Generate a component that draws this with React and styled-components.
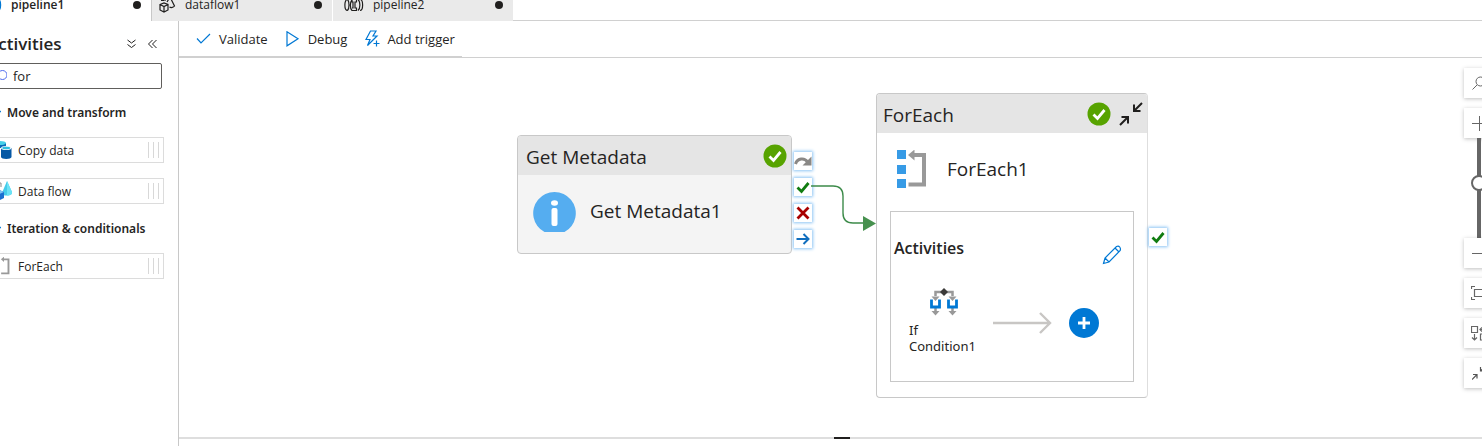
import React from "react";
import styled, { createGlobalStyle } from "styled-components";

const GlobalStyle = createGlobalStyle`
  *, *::before, *::after { box-sizing: border-box; }
  body {
    margin: 0;
    background: #fff;
    color: #252423;
    font-family: "Open Sans", "Noto Sans", sans-serif;
    overflow: hidden;
  }
  button, input { font: inherit; color: inherit; }
  button { margin: 0; padding: 0; border: 0; background: none; cursor: pointer; }
  h2, h3, h4, p, ul { margin: 0; padding: 0; }
  ul { list-style: none; }
  svg { display: block; flex: none; }
`;

const Viewport = styled.div`
  height: 100vh;
  overflow: hidden;
`;

const Shell = styled.div`
  display: flex;
  flex-direction: column;
  height: calc(100% + 12px);
  margin: -12px -12px 0 -29px;
`;

const TabBar = styled.div`
  display: flex;
  flex: none;
  height: 33px;
  border-bottom: 1px solid #d0d0d0;
`;

const Tab = styled.button`
  display: flex;
  align-items: center;
  width: ${(p) => (p.$active ? 180 : 181)}px;
  height: 33px;
  padding: 0 10px 0 ${(p) => p.$inset}px;
  gap: 9px;
  border-left: ${(p) => (p.$edge ? `1px solid ${p.$edge}` : "0")};
  background: ${(p) => (p.$active ? "#fff" : "#eaeaea")};
  font-size: 12px;
  font-weight: ${(p) => (p.$active ? 600 : 400)};
  line-height: 12px;
`;

const TabLabel = styled.span`
  flex: 1;
  text-align: left;
`;

const Dot = styled.span`
  width: 8px;
  height: 8px;
  border-radius: 50%;
  background: #201f1e;
`;

const Workspace = styled.div`
  display: flex;
  flex: 1;
  min-height: 0;
`;

const Sidebar = styled.aside`
  flex: none;
  width: 208px;
  padding: 12px 14px 0 16px;
  border-right: 1px solid #c8c8c8;
`;

const SidebarHeader = styled.div`
  display: flex;
  align-items: center;
  gap: 12px;
  height: 22px;
  padding-right: 7px;
`;

const SidebarTitle = styled.h2`
  flex: 1;
  font-size: 17px;
  font-weight: 600;
  line-height: 22px;
`;

const SearchBox = styled.label`
  display: flex;
  align-items: center;
  gap: 6px;
  height: 26px;
  margin: 8px 2px 0 0;
  padding-left: 7px;
  border: 1px solid #605e5c;
  border-radius: 2px;
`;

const SearchInput = styled.input`
  flex: 1;
  min-width: 0;
  padding: 0;
  border: 0;
  outline: 0;
  background: none;
  font-size: 13px;
  line-height: 16px;
`;

const GroupToggle = styled.button`
  display: flex;
  align-items: center;
  gap: 6px;
  height: 20px;
  margin-top: 14px;
  font-family: "Noto Sans", "Open Sans", sans-serif;
  font-size: 12px;
  font-weight: 600;
  line-height: 20px;
  white-space: nowrap;
`;

const ActivityList = styled.ul`
  display: flex;
  flex-direction: column;
  gap: 15px;
  padding: 14px 0 1px;
`;

const ActivityItem = styled.li`
  display: flex;
  align-items: center;
  gap: 6px;
  height: 26px;
  padding: 0 4px 0 2px;
  border: 1px solid #dcdcdc;
  font-size: 12px;
  line-height: 16px;
`;

const ActivityName = styled.span`
  flex: 1;
  padding-top: 2px;
`;

const Grip = styled.span`
  display: flex;
  gap: 4px;
  height: 16px;

  &::before, &::after, & > i { content: ""; width: 1px; background: #d8d8d8; }
`;

const Main = styled.main`
  display: flex;
  flex: 1;
  flex-direction: column;
  min-width: 0;
`;

const Toolbar = styled.div`
  display: flex;
  flex: none;
  height: 37px;
  border-bottom: 1px solid #d0d0d0;
`;

const ToolbarActions = styled.div`
  display: flex;
  align-items: center;
  gap: 17px;
  height: 37px;
  padding: 0 7px 0 16px;
  border-bottom: 2px solid #d0d0d0;
`;

const ToolButton = styled.button`
  display: flex;
  align-items: center;
  gap: 7px;
  font-size: 13px;
  line-height: 20px;
`;

const Canvas = styled.section`
  position: relative;
  flex: 1;
  min-height: 0;
`;

const Splitter = styled.div`
  display: flex;
  flex: none;
  height: 9px;

  &::before, &::after {
    content: "";
    flex: 1 1 0;
    height: 2px;
    background: #dedede;
  }
  &::before { flex-basis: 11px; }
`;

const SplitterHandle = styled.span`
  width: 16px;
  height: 2px;
  background: #201f1e;
`;

const Node = styled.article`
  position: absolute;
  left: ${(p) => p.$x}px;
  top: ${(p) => p.$y}px;
  width: ${(p) => p.$width}px;
  border: 1px solid #c8c8c8;
  border-right-color: ${(p) => p.$farEdge || "#c8c8c8"};
  border-radius: 4px;
  background: ${(p) => p.$fill};
`;

const NodeHeader = styled.header`
  display: flex;
  align-items: center;
  gap: 8px;
  height: 39px;
  padding: 0 4px 0 ${(p) => p.$inset}px;
  border-radius: 3px 3px 0 0;
  background: #e5e5e5;
`;

const NodeType = styled.h3`
  flex: 1;
  padding-top: 2px;
  font-size: 19px;
  font-weight: 400;
  line-height: 24px;
`;

const NodeBody = styled.div`
  display: flex;
  align-items: center;
  gap: ${(p) => p.$gap}px;
  height: ${(p) => p.$height}px;
  padding: 0 0 ${(p) => p.$below || 0}px ${(p) => p.$inset}px;
`;

const NodeName = styled.p`
  font-size: 19px;
  line-height: 24px;
`;

const Ports = styled.div`
  position: absolute;
  left: ${(p) => p.$x}px;
  top: ${(p) => p.$y}px;
  display: flex;
  flex-direction: column;
  gap: 8px;
`;

const Port = styled.button`
  display: grid;
  place-items: center;
  width: 18px;
  height: 18px;
  background: #fff;
  box-shadow: 0 0 3px 1px #8cc4f4;
`;

const Connector = styled.svg`
  position: absolute;
  left: 632px;
  top: 120px;
`;

const InnerPanel = styled.div`
  margin: 7px 13px 15px;
  padding: 0 0 27px 3px;
  border: 1px solid #c8c8c8;
`;

const InnerHeader = styled.div`
  display: flex;
  justify-content: space-between;
  height: 72px;
  padding: 25px 11px 0 0;
`;

const InnerTitle = styled.h4`
  font-size: 16px;
  font-weight: 600;
  line-height: 22px;
`;

const EditButton = styled.button`
  align-self: flex-start;
  margin-top: 8px;
`;

const InnerFlow = styled.div`
  display: flex;
  align-items: center;
  gap: 16px;
  padding-left: 15px;
`;

const FlowStep = styled.div`
  display: flex;
  align-items: center;
  gap: 16px;
  padding-top: 8px;
`;

const ChildActivity = styled.div`
  width: 68px;
  font-family: "Noto Sans", "Open Sans", sans-serif;
  font-size: 13px;
  line-height: 16px;

  svg { margin: 4px 0 6px 20px; }
`;

const AddButton = styled.button`
  display: grid;
  place-items: center;
  width: 30px;
  height: 30px;
  border-radius: 50%;
  background: #0078d4;
`;

const ViewControls = styled.div`
  position: absolute;
  top: 10px;
  right: 0;
  display: flex;
  flex-direction: column;
  gap: 10px;
`;

const ZoomGroup = styled.div`
  display: flex;
  flex-direction: column;
`;

const ViewButton = styled.button`
  display: grid;
  place-items: center;
  width: 30px;
  height: 30px;
  background: #fff;
  box-shadow: 0 1px 4px rgba(0, 0, 0, 0.25);
`;

const ZoomSlider = styled.input`
  appearance: none;
  writing-mode: vertical-lr;
  direction: rtl;
  width: 30px;
  height: 100px;
  margin: 0;
  background: none;

  &::-webkit-slider-runnable-track {
    width: 4px;
    height: 100px;
    background: #666;
  }
  &::-webkit-slider-thumb {
    appearance: none;
    width: 16px;
    height: 16px;
    margin-left: -6px;
    border: 2px solid #666;
    border-radius: 50%;
    background: #fff;
  }
`;

const Line = ({ w, h = w, box, color = "#201f1e", sw = 1, children }) => (
  <svg width={w} height={h} viewBox={box || `0 0 ${w} ${h}`} fill="none" stroke={color} strokeWidth={sw}>
    {children}
  </svg>
);

const PipelineIcon = ({ color }) => (
  <Line w={20} h={14} color={color} sw={1.2}>
    <path d="M3.500 1.500C0 1.500 0 12.500 3.500 12.500M3.500 1.500c2 2 2 9 0 11M8 2c-2.200 2-2.200 8.500 0 10.500h4.500V10H11V4h1.500V1.500H8V4h1v6H8M16 1.500c3.500 0 3.500 11 0 11M14 1.500c2.500 2 2.500 9 0 11" />
  </Line>
);

const DataflowIcon = () => (
  <Line w={18} h={18} sw={1.2}>
    <path d="M2 8.500L6 7l4 1.500v5.500L6 16l-4-2zM2 8.500L6 10.500l4-2M6 10.500V16M12 1l4.500 9c-1 1.500-3.500 2-5 1M12 1L9 6M3 4.500h3M7 2v3" />
  </Line>
);

const CopyDataIcon = () => (
  <svg width="22" height="20" viewBox="0 0 22 20">
    <path d="M4 3v11c0 3 12 3 12 0V3z" fill="#0a6ab8" />
    <ellipse cx="10" cy="3" rx="6" ry="2" fill="#45d0e8" />
    <path d="M10 8v9c0 3.200 12 3.200 12 0V8z" fill="#fff" />
    <path d="M11 8v9c0 2.600 10.500 2.600 10.500 0V8z" fill="#0659a5" />
    <ellipse cx="16.200" cy="8" rx="5.200" ry="2" fill="#e8f5fb" />
    <ellipse cx="16.200" cy="8" rx="4" ry="1.200" fill="#2fc1e0" />
  </svg>
);

const DataFlowColorIcon = () => (
  <svg width="22" height="20" viewBox="0 0 22 20">
    <path d="M17 0l5.500 12c-1 3-8.500 3.500-11 1z" fill="#45ccea" />
    <path d="M17 0l5.500 12c-1 2-3.500 2.500-5.500 2.500z" fill="#6be2f5" />
    <path d="M2 11l6-2.500L14 11v6l-6 3-6-3z" fill="#1a6fd0" />
    <path d="M2 11l6-2.500L14 11l-6 2.500z" fill="#7cc4f5" />
    <path d="M8 2h3M11 2v4" stroke="#888" fill="none" />
  </svg>
);

const LoopShape = () => (
  <>
    <path d="M0 0h9v9H0zM0 15h9v9H0zM0 29h9v9H0z" fill="#379be6" />
    <path d="M17 5h10v29.500H11.500" fill="none" stroke="#999" strokeWidth="4" />
    <path d="M11 5l6.500-5.500v11z" fill="#999" />
  </>
);

const ForEachIcon = () => (
  <svg width="29" height="38" viewBox="0 0 29 38"><LoopShape /></svg>
);

const ForEachSmallIcon = () => (
  <svg width="22" height="18" viewBox="-12 0 46.400 38"><LoopShape /></svg>
);

const InfoIcon = () => (
  <svg width="43" height="41" viewBox="0 0 43 41">
    <path d="M11.500 41a21.300 21.300 0 1 1 20 0z" fill="#55adf0" />
    <ellipse cx="21.500" cy="12" rx="3.500" ry="2.700" fill="#fff" />
    <rect x="18.500" y="17" width="6" height="18" rx="2" fill="#fff" />
  </svg>
);

const SuccessIcon = () => (
  <svg width="24" height="24" viewBox="0 0 24 24" role="img" aria-label="Succeeded">
    <circle cx="12" cy="12" r="11.500" fill="#57a300" />
    <path d="M6.500 12.500l4 4 7-8.500" fill="none" stroke="#fff" strokeWidth="2.800" />
  </svg>
);

const CollapseIcon = () => (
  <Line w={24} h={24} sw={2}>
    <path d="M23 1l-8 8M15 2.500V9h6.500M1 23l8-8M2.500 15H9v6.500" />
  </Line>
);

const CheckPortIcon = () => (
  <Line w={14} color="#107c10" sw={2.800}><path d="M1.500 7.500l4 4L12.500 3" /></Line>
);

const ConditionIcon = () => (
  <svg width="30" height="28" viewBox="0 0 30 28">
    <path d="M6.500 8V4h17v4M6.500 20v4M23.500 20v4" fill="none" stroke="#999" strokeWidth="2.500" />
    <path d="M2.500 8.500h8l-4 4.500zM19.500 8.500h8l-4 4.500zM2.500 23h8l-4 4.500zM19.500 23h8l-4 4.500z" fill="#999" />
    <path d="M2.500 11.500v7.500h8v-7.500M19.500 11.500v7.500h8v-7.500" fill="none" stroke="#0078d4" strokeWidth="2.800" />
    <path d="M15 0l4 4-4 4-4-4z" fill="#3b3a39" />
  </svg>
);

function Activity({ icon, name }) {
  return (
    <ActivityItem>
      {icon}
      <ActivityName>{name}</ActivityName>
      <Grip><i /></Grip>
    </ActivityItem>
  );
}

function Group({ title, children }) {
  return (
    <section>
      <GroupToggle aria-expanded="true">
        <Line w={14} color="#0078d4" sw={1.200}><path d="M4 5l5 5 5-5" /></Line>
        {title}
      </GroupToggle>
      <ActivityList>{children}</ActivityList>
    </section>
  );
}

export default function App() {
  return (
    <Viewport>
      <GlobalStyle />
      <Shell>
        <TabBar>
          <Tab $active $inset={11}>
            <PipelineIcon color="#0078d4" />
            <TabLabel>pipeline1</TabLabel>
            <Dot />
          </Tab>
          <Tab $inset={6} $edge="#c8c8c8">
            <DataflowIcon />
            <TabLabel>dataflow1</TabLabel>
            <Dot />
          </Tab>
          <Tab $inset={11} $edge="#fff">
            <PipelineIcon />
            <TabLabel>pipeline2</TabLabel>
            <Dot />
          </Tab>
        </TabBar>
        <Workspace>
          <Sidebar>
            <SidebarHeader>
              <SidebarTitle>Activities</SidebarTitle>
              <button aria-label="Expand all">
                <Line w={9} h={10}><path d="M.5 1l4 3 4-3M.5 5.500l4 3 4-3" /></Line>
              </button>
              <button aria-label="Hide activities">
                <Line w={9} h={10}><path d="M4.500 1l-4 4 4 4M8.500 1l-4 4 4 4" /></Line>
              </button>
            </SidebarHeader>
            <SearchBox>
              <Line w={12} color="#4f6bed"><circle cx="7.500" cy="5" r="4.500" /><path d="M4.500 8L1 11.500" /></Line>
              <SearchInput type="text" aria-label="Search activities" defaultValue="for" />
            </SearchBox>
            <Group title="Move and transform">
              <Activity icon={<CopyDataIcon />} name="Copy data" />
              <Activity icon={<DataFlowColorIcon />} name="Data flow" />
            </Group>
            <Group title="Iteration &amp; conditionals">
              <Activity icon={<ForEachSmallIcon />} name="ForEach" />
            </Group>
          </Sidebar>
          <Main>
            <Toolbar>
              <ToolbarActions>
                <ToolButton>
                  <Line w={17} h={16} color="#0078d4" sw={1.200}><path d="M2 7.500l4 4.500L15 3" /></Line>
                  Validate
                </ToolButton>
                <ToolButton>
                  <Line w={16} h={16} color="#0078d4" sw={1.200}><path d="M2 .800v14l11-7z" /></Line>
                  Debug
                </ToolButton>
                <ToolButton>
                  <Line w={16} h={18} color="#0078d4" sw={1.200}>
                    <path d="M6.500 1H12L9 6h4L3.500 15.500 6 9.500H2zM12.500 10.500v6M9.500 13.500h6" />
                  </Line>
                  Add trigger
                </ToolButton>
              </ToolbarActions>
            </Toolbar>
            <Canvas>
              <Node $x={338} $y={77} $width={275} $fill="#f4f4f4">
                <NodeHeader $inset={8}>
                  <NodeType>Get Metadata</NodeType>
                  <SuccessIcon />
                </NodeHeader>
                <NodeBody $gap={14} $height={78} $inset={15} $below={6}>
                  <InfoIcon />
                  <NodeName>Get Metadata1</NodeName>
                </NodeBody>
                <Ports $x={276} $y={16}>
                  <Port aria-label="On skip">
                    <svg width="18" height="18" viewBox="0 0 18 18">
                      <path d="M1.500 12c2-6 9-6.500 12-2" fill="none" stroke="#8a8886" strokeWidth="3" />
                      <path d="M17.500 4.500v9H8.500z" fill="#8a8886" />
                    </svg>
                  </Port>
                  <Port aria-label="On success"><CheckPortIcon /></Port>
                  <Port aria-label="On fail">
                    <Line w={14} color="#a80000" sw={2.800}><path d="M1.500 1.500l11 11M12.500 1.500l-11 11" /></Line>
                  </Port>
                  <Port aria-label="On completion">
                    <Line w={14} color="#106ebe" sw={2}><path d="M.5 7h12M7.500 2l5 5-5 5" /></Line>
                  </Port>
                </Ports>
              </Node>
              <Connector width="66" height="56" viewBox="0 0 66 56">
                <path d="M0 8h22q10 0 10 10v17q0 10 10 10h12" fill="none" stroke="#3d8b4a" strokeWidth="1.400" />
                <path d="M52 38l13 7.500-13 7.500z" fill="#47914f" />
              </Connector>
              <Node $x={697} $y={35} $width={272} $fill="#fff" $farEdge="#dedede">
                <NodeHeader $inset={6}>
                  <NodeType>ForEach</NodeType>
                  <SuccessIcon />
                  <button aria-label="Collapse"><CollapseIcon /></button>
                </NodeHeader>
                <NodeBody $gap={21} $height={71} $inset={20}>
                  <ForEachIcon />
                  <NodeName>ForEach1</NodeName>
                </NodeBody>
                <InnerPanel>
                  <InnerHeader>
                    <InnerTitle>Activities</InnerTitle>
                    <EditButton aria-label="Edit activities">
                      <Line w={20} color="#0078d4" sw={1.200}>
                        <path d="M1.500 18.500l1.500-5.500L14.500 1.500q2-1 3.200.500t.500 3.500L7 17zM3 13l4 4M13 3l4 4" />
                      </Line>
                    </EditButton>
                  </InnerHeader>
                  <InnerFlow>
                    <ChildActivity>
                      <ConditionIcon />
                      If Condition1
                    </ChildActivity>
                    <FlowStep>
                      <Line w={60} h={22} color="#c8c6c4" sw={2.400}><path d="M0 11h57M47 1l10 10-10 10" /></Line>
                      <AddButton aria-label="Add activity">
                        <Line w={14} color="#fff" sw={2.800}><path d="M7 1v12M1 7h12" /></Line>
                      </AddButton>
                    </FlowStep>
                  </InnerFlow>
                </InnerPanel>
                <Ports $x={272} $y={134}>
                  <Port aria-label="On success"><CheckPortIcon /></Port>
                </Ports>
              </Node>
              <ViewControls>
                <ViewButton aria-label="Search canvas">
                  <Line w={14} color="#666"><circle cx="8.500" cy="5.500" r="4.500" /><path d="M5 9l-4.500 4.500" /></Line>
                </ViewButton>
                <ZoomGroup>
                  <ViewButton aria-label="Zoom in">
                    <Line w={15} color="#666"><path d="M7.500 0v15M0 7.500h15" /></Line>
                  </ViewButton>
                  <ZoomSlider type="range" aria-label="Zoom" min="0" max="100" defaultValue="56" />
                  <ViewButton aria-label="Zoom out">
                    <Line w={15} color="#666"><path d="M0 7.500h15" /></Line>
                  </ViewButton>
                </ZoomGroup>
                <ViewButton aria-label="Zoom to fit">
                  <Line w={16} color="#666" sw={1.200}>
                    <path d="M3.500 4.500h9v7h-9zM.5 4V1.500H4M12 1.500h3.500V4M.5 12v2.500H4M12 14.500h3.500V12" />
                  </Line>
                </ViewButton>
                <ViewButton aria-label="Auto align">
                  <Line w={16} color="#666" sw={1.200}>
                    <path d="M.5 1.500h6v6h-6zM9.500 9h6v6h-6zM3.500 9v6M1 12.500L3.500 15 6 12.500M9 4.500h4V8M11 2.500l-2 2 2 2" />
                  </Line>
                </ViewButton>
                <ViewButton aria-label="Collapse all">
                  <Line w={14} color="#555" sw={1.200}><path d="M0 13.500l5-5M1 8.500h4v4M13.500 0l-5 5M8.500 1v4h4" /></Line>
                </ViewButton>
              </ViewControls>
            </Canvas>
            <Splitter role="separator" aria-orientation="horizontal"><SplitterHandle /></Splitter>
          </Main>
        </Workspace>
      </Shell>
    </Viewport>
  );
}
